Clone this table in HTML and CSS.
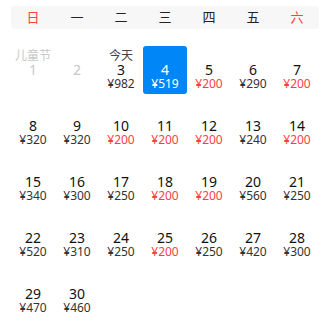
FILE: index.html
```html
<!DOCTYPE html>
<html lang="zh-CN">
<head>
  <meta charset="UTF-8" />
  <meta name="viewport" content="width=device-width, initial-scale=1.0"/>
  <title>选择日期</title>
  <link rel="stylesheet" href="styles.css">
</head>
<body>
  <div class="calendar">
    <div class="week-bar">
      <span class="weekend">日</span>
      <span>一</span>
      <span>二</span>
      <span>三</span>
      <span>四</span>
      <span>五</span>
      <span class="weekend">六</span>
    </div>

    <div id="days" class="days"></div>
  </div>

  <script>
    const prices = {
      3: 982, 4: 519, 5: 200, 6: 290, 7: 200,
      8: 320, 9: 320, 10: 200, 11: 200, 12: 200, 13: 240, 14: 200,
      15: 340, 16: 300, 17: 250, 18: 200, 19: 200, 20: 560, 21: 250,
      22: 520, 23: 310, 24: 250, 25: 200, 26: 250, 27: 420, 28: 300,
      29: 470, 30: 460
    };
    const labels = { 1: '儿童节', 3: '今天' };
    const today = 3;
    const selected = 4;
    const lowest = 200;

    const days = document.getElementById('days');

    for (let d = 1; d <= 30; d++) {
      const cell = document.createElement('div');
      cell.className = 'day';
      if (d < today) cell.classList.add('past');
      if (d === selected) cell.classList.add('selected');

      const price = prices[d];
      cell.innerHTML = `
        <span class="label">${labels[d] || '&nbsp;'}</span>
        <span class="num">${d}</span>
        <span class="price${price === lowest ? ' low' : ''}">${price ? '¥' + price : '&nbsp;'}</span>
      `;
      days.appendChild(cell);
    }
  </script>
</body>
</html>
```

FILE: styles.css
```css
body {
  margin: 0;
  padding: 0;
  background-color: #fff;
  font-family: "Noto Sans", "Noto Sans CJK SC", sans-serif;
  color: #333;
}

.calendar {
  padding: 6px 7px 0 11px;
}

.week-bar {
  display: grid;
  grid-template-columns: repeat(7, 44px);
  height: 23px;
  background-color: #f7f7f7;
  border-radius: 4px;
  font-size: 13px;
  line-height: 23px;
  text-align: center;
  color: #222;
}

.week-bar .weekend {
  color: #ff4040;
}

.days {
  display: grid;
  grid-template-columns: repeat(7, 44px);
  row-gap: 8px;
  margin-top: 17px;
}

.day {
  display: flex;
  flex-direction: column;
  justify-content: center;
  align-items: center;
  height: 48px;
  border-radius: 3px;
  line-height: 14px;
  text-align: center;
}

.label {
  font-size: 12px;
  color: #444;
}

.num {
  font-size: 14px;
  color: #111;
}

.price {
  font-size: 12px;
  color: #333;
}

.price.low {
  color: #ff4040;
}

.past .label,
.past .num {
  color: #c8c8c8;
}

.selected {
  background-color: #0086f6;
}

.selected .num,
.selected .price {
  color: #fff;
}
```
